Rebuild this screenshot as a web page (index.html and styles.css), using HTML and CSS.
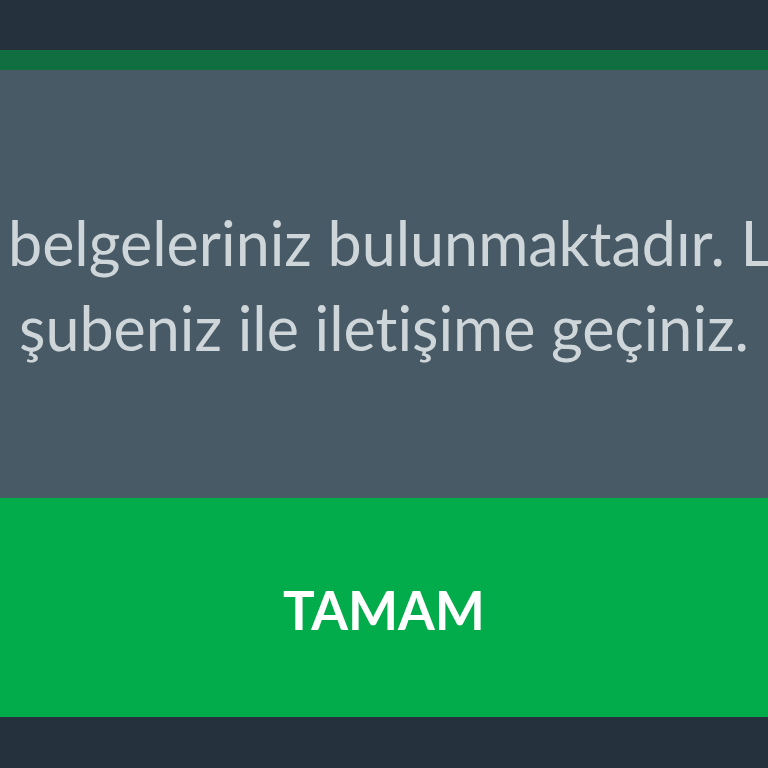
FILE: index.html
```html
<!DOCTYPE html>
<html lang="tr">
<head>
<meta charset="utf-8">
<link rel="stylesheet" href="styles.css">
</head>
<body>
<div class="screen">
  <div class="topbar"></div>
  <div class="stripe"></div>
  <div class="panel">
    <p class="line line-one">belgeleriniz bulunmaktadır. Lütfen</p>
    <p class="line line-two">şubeniz ile iletişime geçiniz.</p>
  </div>
  <div class="button"><span class="button-label">TAMAM</span></div>
  <div class="bottombar"></div>
</div>
</body>
</html>
```
FILE: styles.css
```css
html, body {
  margin: 0;
  padding: 0;
  width: 768px;
  height: 768px;
  overflow: hidden;
  background: #25313c;
}
.screen {
  display: flex;
  flex-direction: column;
  width: 768px;
  height: 768px;
  font-family: Lato, "Noto Sans", sans-serif;
  font-variant-ligatures: none;
}
.topbar {
  height: 50px;
  background: #25313c;
}
.stripe {
  height: 20px;
  background: #106e40;
}
.panel {
  height: 428px;
  background: #475a66;
  padding-top: 130px;
  box-sizing: border-box;
  overflow: hidden;
}
.line {
  margin: 0;
  white-space: nowrap;
  font-size: 61px;
  line-height: 85px;
  color: #cfd6da;
  font-weight: 400;
}
.line-one {
  padding-left: 8px;
}
.line-two {
  text-align: center;
}
.button {
  height: 219px;
  background: #02ac4b;
  display: flex;
  align-items: center;
  justify-content: center;
}
.button-label {
  color: #ffffff;
  font-weight: 700;
  font-size: 53px;
  padding-top: 3px;
}
.bottombar {
  flex: 1;
  background: #25313c;
}
```
